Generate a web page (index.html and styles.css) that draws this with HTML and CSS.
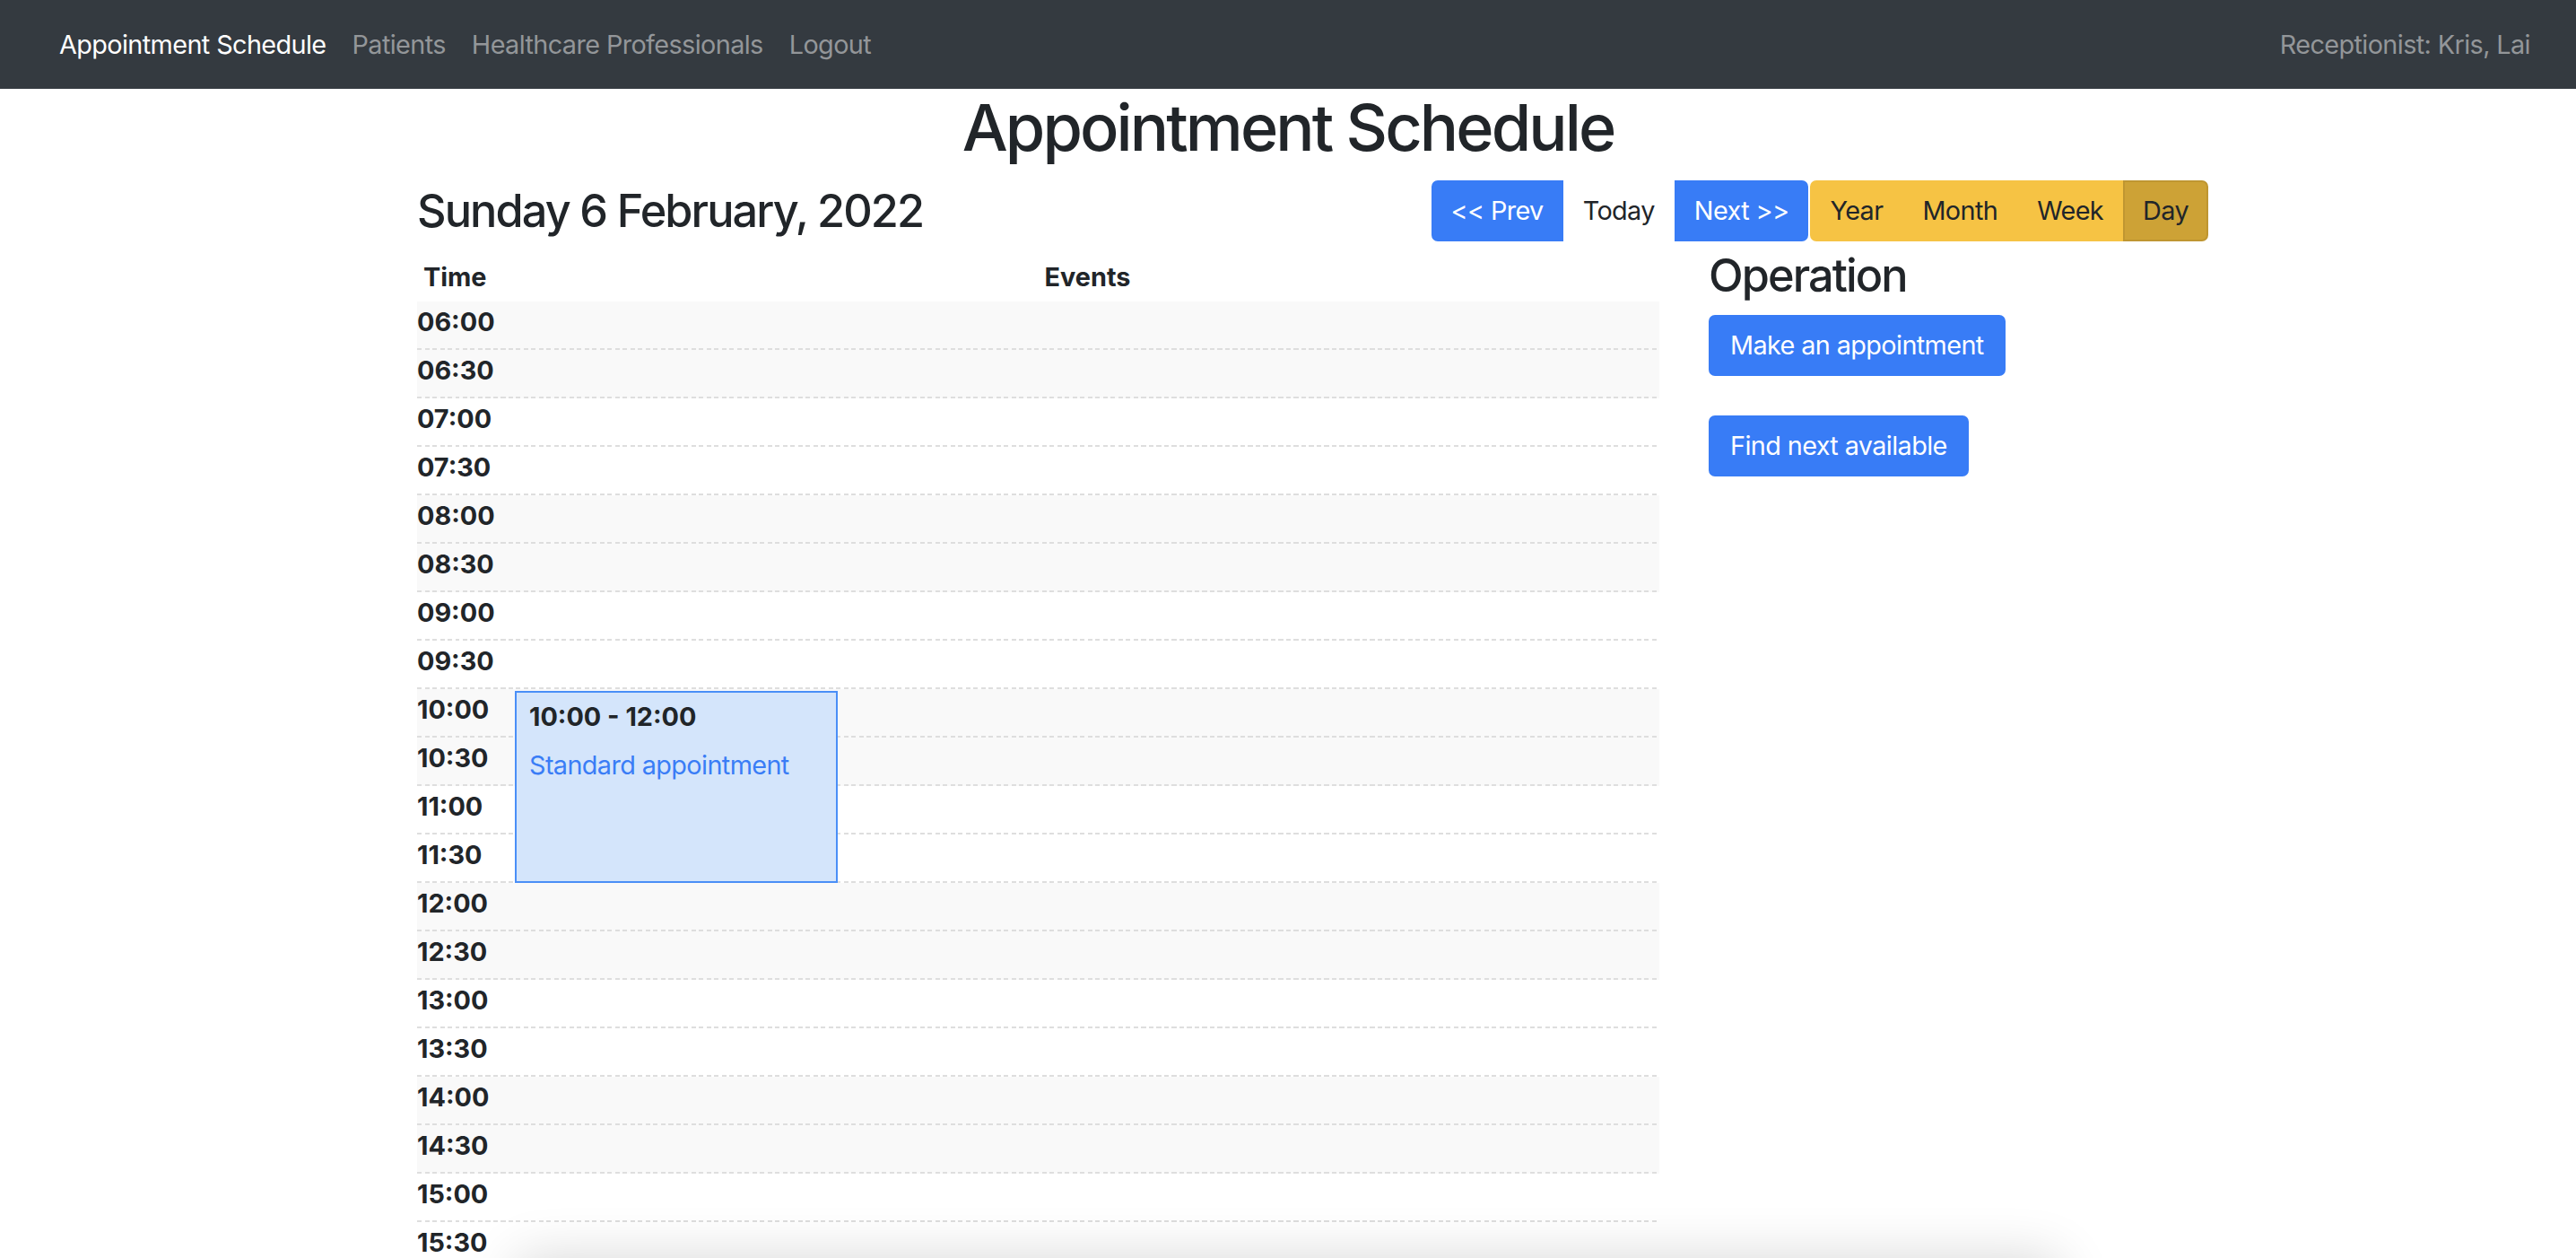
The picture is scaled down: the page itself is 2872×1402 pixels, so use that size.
FILE: index.html
```html
<!DOCTYPE html>
<html lang="en">
<head>
<meta charset="utf-8">
<title>Appointment Schedule</title>
<link rel="stylesheet" href="styles.css">
</head>
<body>
<nav class="navbar">
  <div class="nav-links">
    <a class="nav-link active" href="#">Appointment Schedule</a>
    <a class="nav-link" href="#">Patients</a>
    <a class="nav-link" href="#">Healthcare Professionals</a>
    <a class="nav-link" href="#">Logout</a>
  </div>
  <span class="nav-user">Receptionist: Kris, Lai</span>
</nav>

<h1 class="page-title">Appointment Schedule</h1>

<div class="container">
  <div class="toolbar">
    <h3 class="heading">Sunday 6 February, 2022</h3>
    <div class="controls">
      <div class="btn-group">
        <button class="btn btn-sm-pad btn-primary">&lt;&lt; Prev</button>
        <button class="btn btn-sm-pad btn-plain">Today</button>
        <button class="btn btn-sm-pad btn-primary">Next &gt;&gt;</button>
      </div>
      <div class="btn-group">
        <button class="btn btn-sm-pad btn-warning">Year</button>
        <button class="btn btn-sm-pad btn-warning">Month</button>
        <button class="btn btn-sm-pad btn-warning">Week</button>
        <button class="btn btn-sm-pad btn-warning active">Day</button>
      </div>
    </div>
  </div>

  <div class="content">
    <div class="schedule">
      <div class="sched-head">
        <div class="head-time">Time</div>
        <div class="head-events">Events</div>
      </div>
      <div class="sched-body">
        <div class="slot alt"><span class="slot-time">06:00</span></div>
        <div class="slot alt"><span class="slot-time">06:30</span></div>
        <div class="slot"><span class="slot-time">07:00</span></div>
        <div class="slot"><span class="slot-time">07:30</span></div>
        <div class="slot alt"><span class="slot-time">08:00</span></div>
        <div class="slot alt"><span class="slot-time">08:30</span></div>
        <div class="slot"><span class="slot-time">09:00</span></div>
        <div class="slot"><span class="slot-time">09:30</span></div>
        <div class="slot alt"><span class="slot-time">10:00</span></div>
        <div class="slot alt"><span class="slot-time">10:30</span></div>
        <div class="slot"><span class="slot-time">11:00</span></div>
        <div class="slot"><span class="slot-time">11:30</span></div>
        <div class="slot alt"><span class="slot-time">12:00</span></div>
        <div class="slot alt"><span class="slot-time">12:30</span></div>
        <div class="slot"><span class="slot-time">13:00</span></div>
        <div class="slot"><span class="slot-time">13:30</span></div>
        <div class="slot alt"><span class="slot-time">14:00</span></div>
        <div class="slot alt"><span class="slot-time">14:30</span></div>
        <div class="slot"><span class="slot-time">15:00</span></div>
        <div class="slot"><span class="slot-time">15:30</span></div>
        <div class="slot alt"><span class="slot-time">16:00</span></div>
        <div class="slot alt"><span class="slot-time">16:30</span></div>

        <div class="event" style="top: 434px; height: 214px;">
          <div class="event-time">10:00 - 12:00</div>
          <a class="event-title" href="#">Standard appointment</a>
        </div>
      </div>
    </div>

    <aside class="ops">
      <h3 class="heading ops-title">Operation</h3>
      <div class="ops-actions">
        <button class="btn btn-primary btn-rounded">Make an appointment</button>
        <button class="btn btn-primary btn-rounded">Find next available</button>
      </div>
    </aside>
  </div>
</div>

<div class="sheet"></div>
</body>
</html>
```

FILE: styles.css
```css
* { box-sizing: border-box; }

html, body { margin: 0; }

body {
  font-family: Inter, "Noto Sans", sans-serif;
  font-size: 28.8px;
  line-height: 1.5;
  letter-spacing: -0.6px;
  color: #212529;
  background: #fff;
  overflow: hidden;
}

/* Navbar */
.navbar {
  height: 99px;
  background: #343a40;
  display: flex;
  align-items: center;
  justify-content: space-between;
  padding: 0 51px 0 66px;
}
.nav-links { display: flex; gap: 29px; }
.nav-link { color: #939699; text-decoration: none; }
.nav-link.active { color: #fff; }
.nav-user { color: #939699; }

/* Title */
.page-title {
  margin: 0 0 16px;
  font-size: 72px;
  font-weight: 500;
  line-height: 86px;
  letter-spacing: -2.9px;
  text-align: center;
}

.container { width: 1997px; margin-left: 465px; }

.toolbar {
  display: flex;
  justify-content: space-between;
  align-items: center;
  height: 68px;
  margin-top: 1px;
}

.heading {
  margin: 0;
  font-size: 50.4px;
  font-weight: 500;
  line-height: 1.2;
  letter-spacing: -1.9px;
}

.controls { display: flex; gap: 2px; }
.btn-group { display: flex; }

.btn {
  font: inherit;
  font-size: 28.8px;
  line-height: 42px;
  letter-spacing: -0.6px;
  padding: 11px 22px;
  border: 2px solid transparent;
  border-radius: 0;
  cursor: pointer;
  color: #212529;
  background: #fff;
}
.btn-sm-pad { padding-left: 20px; padding-right: 20px; }
.btn-group .btn:first-child { border-radius: 7px 0 0 7px; }
.btn-group .btn:last-child { border-radius: 0 7px 7px 0; }
.btn-rounded { border-radius: 7px; }

.btn-primary { background: #387cf6; border-color: #387cf6; color: #fff; }
.btn-plain { background: #fff; border-color: #fff; }
.btn-warning { background: #f6c344; border-color: #f6c344; color: #212529; }
.btn-warning.active { background: #cda236; border-color: #bf9631; }

/* Content */
.content {
  display: flex;
  gap: 55px;
  margin-top: 13px;
}

.schedule { width: 1385px; flex: none; }

.sched-head {
  display: flex;
  align-items: center;
  height: 54px;
  font-weight: 700;
  letter-spacing: 0;
}
.head-time { width: 110px; padding-left: 7px; }
.head-events { flex: 1; text-align: center; }

.sched-body { position: relative; }

.slot {
  height: 54px;
  display: flex;
  background-image: repeating-linear-gradient(90deg, #dedede 0 5px, transparent 5px 8.5px);
  background-size: 100% 2px;
  background-repeat: no-repeat;
  background-position: 0 100%;
}
.slot.alt { background-color: #f9f9f9; }

.slot-time {
  width: 110px;
  font-weight: 700;
  line-height: 46px;
  letter-spacing: 0;
}

.event {
  position: absolute;
  left: 109px;
  width: 360px;
  border: 2px solid #4a8ff7;
  background: #d4e5fb;
  padding: 5px 14px;
}
.event-time { font-weight: 700; line-height: 43px; margin-bottom: 11px; letter-spacing: 0; }
.event-title { color: #3a7df6; text-decoration: none; line-height: 43px; }

/* Operation column */
.ops { flex: 1; }
.ops-title { margin: -5px 0 14px; }
.ops-actions {
  display: flex;
  flex-direction: column;
  align-items: flex-start;
  gap: 44px;
}

/* Sheet just below the fold, only its shadow shows */
.sheet {
  position: fixed;
  left: 50%;
  top: 100%;
  width: 1720px;
  height: 200px;
  transform: translateX(-50%);
  background: #fff;
  border-radius: 12px;
  box-shadow: 0 0 60px rgba(0, 0, 0, 0.16);
}
```
